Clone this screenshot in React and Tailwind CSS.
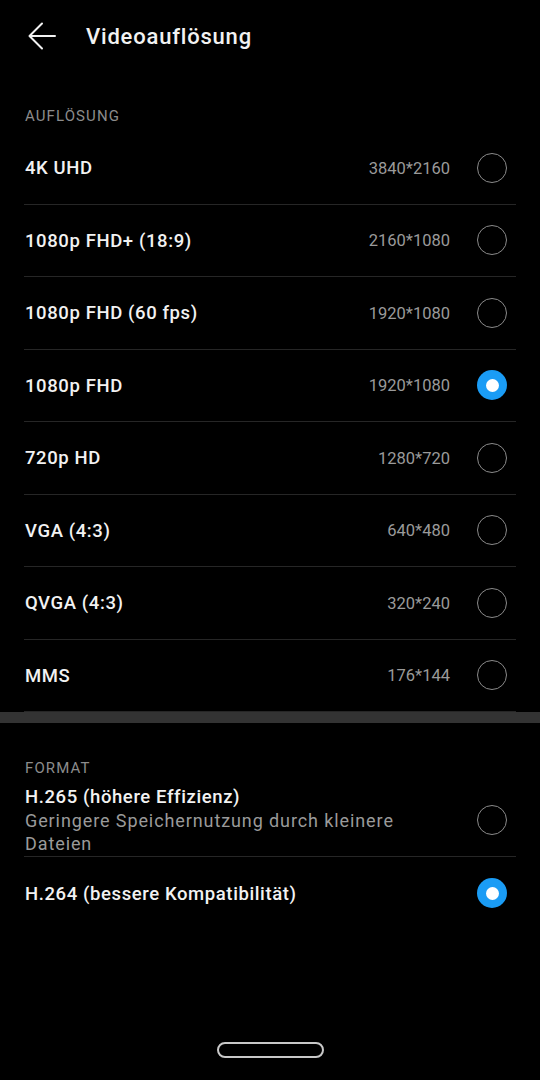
const resolutions = [
  { name: "4K UHD", size: "3840*2160" },
  { name: "1080p FHD+ (18:9)", size: "2160*1080" },
  { name: "1080p FHD (60 fps)", size: "1920*1080" },
  { name: "1080p FHD", size: "1920*1080", selected: true },
  { name: "720p HD", size: "1280*720" },
  { name: "VGA (4:3)", size: "640*480" },
  { name: "QVGA (4:3)", size: "320*240" },
  { name: "MMS", size: "176*144" },
];

const Radio = ({ checked }) =>
  checked ? (
    <span className="flex h-[30px] w-[30px] shrink-0 items-center justify-center rounded-full bg-[#1a9cf5]">
      <span className="h-[13px] w-[13px] rounded-full bg-white" />
    </span>
  ) : (
    <span className="block h-[30px] w-[30px] shrink-0 rounded-full border-[1.5px] border-[#8a8a8a]" />
  );

const App = () => {
  return (
    <div className="flex h-[1080px] w-[540px] flex-col bg-black font-['Roboto',sans-serif] text-[#f2f2f2]">
      {/* Header */}
      <div className="flex h-[72px] items-center pl-[28px]">
        <svg width="28" height="28" viewBox="0 0 28 28" fill="none" stroke="#f2f2f2" strokeWidth="2" strokeLinecap="round" strokeLinejoin="round">
          <path d="M27 14H2M14 1.5L1.5 14L14 26.5" />
        </svg>
        <h1 className="ml-[30px] text-[22px] font-medium tracking-[0.8px]">Videoauflösung</h1>
      </div>

      {/* Resolution */}
      <div className="h-[60px] pl-[25px] pt-[35px] text-[15px] leading-[18px] tracking-[1.1px] text-[#8c8c8c]">
        AUFLÖSUNG
      </div>

      <div className="px-[24px]">
        {resolutions.map((r) => (
          <div
            key={r.name}
            className="flex h-[72.5px] items-center border-b border-[#262626] pl-[1px] pr-[9px]"
          >
            <span className="flex-1 pt-[3px] text-[18.5px] font-medium tracking-[0.6px]">{r.name}</span>
            <span className="mr-[27px] pt-[3px] text-[16.5px] text-[#9a9a9a]">{r.size}</span>
            <Radio checked={r.selected} />
          </div>
        ))}
      </div>

      <div className="h-[11px] bg-[#333333]" />

      {/* Format */}
      <div className="h-[50px] pl-[25px] pt-[36px] text-[15px] leading-[18px] tracking-[1.1px] text-[#8c8c8c]">
        FORMAT
      </div>

      <div className="px-[24px]">
        <div className="flex items-center border-b border-[#262626] pb-[1px] pl-[1px] pr-[9px] pt-[12px]">
          <div className="flex-1">
            <p className="text-[18.5px] font-medium leading-[24px] tracking-[0.6px]">H.265 (höhere Effizienz)</p>
            <p className="w-[410px] text-[18px] leading-[23px] tracking-[0.9px] text-[#9a9a9a]">
              Geringere Speichernutzung durch kleinere Dateien
            </p>
          </div>
          <div className="shrink-0">
            <Radio />
          </div>
        </div>
        <div className="flex h-[72px] items-center pl-[1px] pr-[9px]">
          <span className="flex-1 pt-[3px] text-[18.5px] font-medium tracking-[0.6px]">H.264 (bessere Kompatibilität)</span>
          <Radio checked />
        </div>
      </div>

      {/* Home indicator */}
      <div className="mt-auto flex justify-center pb-[22px] pl-[1px]">
        <div className="h-[16px] w-[107px] rounded-full border-2 border-[#c8c8c8]" />
      </div>
    </div>
  );
};

export default App;
